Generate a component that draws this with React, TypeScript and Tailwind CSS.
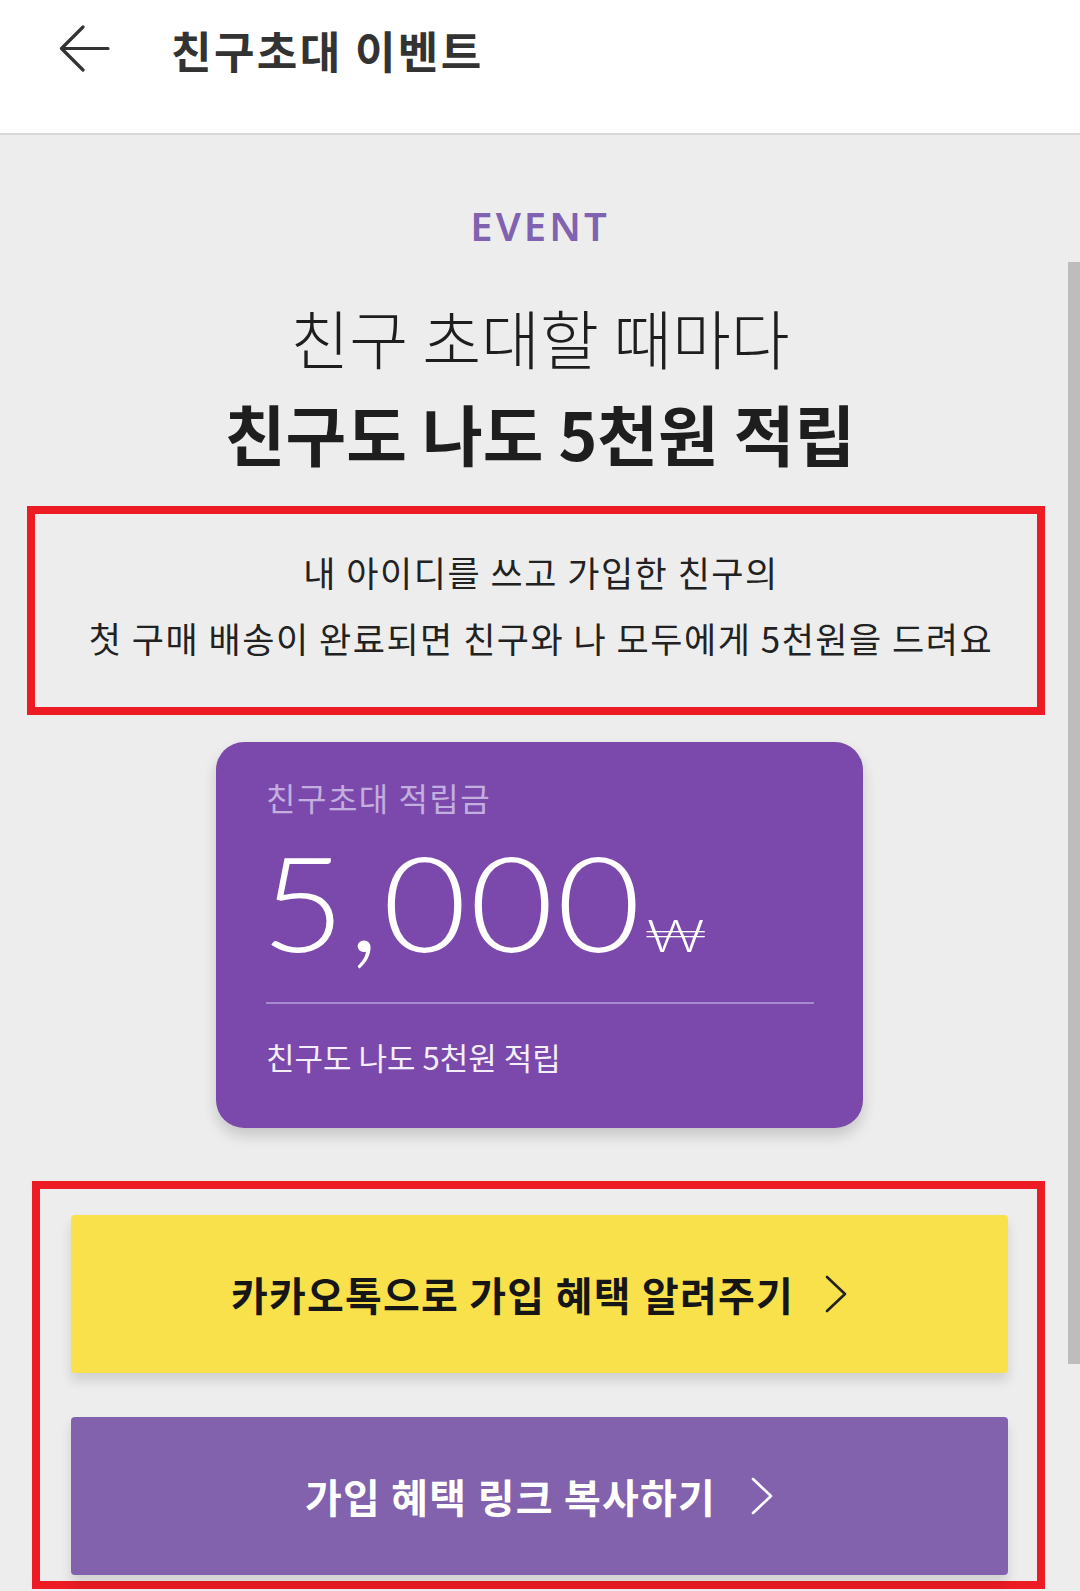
import React from "react";

function BackArrow() {
  return (
    <svg width="52" height="50" viewBox="0 0 52 50" fill="none">
      <path d="M49 23.5H3M24 2L2.5 23.5L24 45" stroke="#333" strokeWidth="3.2" strokeLinecap="round" strokeLinejoin="round" />
    </svg>
  );
}

function Chevron({ color }: { color: string }) {
  return (
    <svg width="24" height="38" viewBox="0 0 24 38" fill="none">
      <path d="M3 2L21 19L3 36" stroke={color} strokeWidth="2.6" strokeLinecap="round" strokeLinejoin="round" />
    </svg>
  );
}

export default function App() {
  return (
    <div className="relative w-[1080px] h-[1591px] overflow-hidden bg-[#ededed] font-['Noto_Sans_CJK_KR','Noto_Sans',sans-serif]">
      <header className="h-[135px] bg-white border-b-2 border-[#d8d8d8] pt-[26px]">
        <div className="flex items-center h-[48px]">
          <div className="ml-[59px]">
            <BackArrow />
          </div>
          <h1 className="ml-[60px] text-[44px] leading-[48px] font-bold text-[#333] tracking-[2.4px]">친구초대 이벤트</h1>
        </div>
      </header>

      <div className="mt-[71px] text-center text-[40px] leading-[40px] font-semibold text-[#8062b0] font-['Noto_Sans',sans-serif] tracking-[3px]">EVENT</div>

      <div className="mt-[42px] text-center text-[#1e1e1e]">
        <div className="text-[64px] leading-[96px] font-light">친구 초대할 때마다</div>
        <div className="text-[66px] leading-[96px] font-bold">친구도 나도 5천원 적립</div>
      </div>

      <div className="mt-[26px] ml-[27px] w-[1018px] h-[209px] border-8 border-[#ed1c24] pt-[25px] pl-[10px] text-center text-[35px] leading-[66px] text-[#222] tracking-[1.5px]">
        <p>내 아이디를 쓰고 가입한 친구의</p>
        <p>첫 구매 배송이 완료되면 친구와 나 모두에게 5천원을 드려요</p>
      </div>

      <div className="mt-[27px] ml-[216px] w-[647px] h-[386px] rounded-[28px] bg-[#7a49ab] shadow-[0_8px_14px_rgba(0,0,0,0.16)] pl-[50px] pt-[35px]">
        <div className="text-[32px] leading-[40px] text-[#c3aee0] tracking-[1.5px]">친구초대 적립금</div>
        <div className="mt-[18px] flex items-baseline h-[132px]">
          <div className="w-[382px] -ml-[5px]">
            <span className="inline-block origin-left scale-x-[1.1] text-[132px] leading-[132px] font-light text-white font-['Lato',sans-serif] tracking-[2.5px]">5,000</span>
          </div>
          <span className="inline-block origin-left scale-x-[1.38] text-[46px] leading-[46px] font-light text-white font-['Lato',sans-serif]">₩</span>
        </div>
        <div className="mt-[35px] w-[548px] h-[2px] bg-[#a78bcf]" />
        <div className="mt-[33px] text-[31px] leading-[40px] text-[#f3eefa]">친구도 나도 5천원 적립</div>
      </div>

      <div className="mt-[53px] ml-[32px] w-[1013px] h-[408px] border-8 border-[#ed1c24] pt-[26px] pl-[31px]">
        <button className="flex items-center justify-center w-[937px] h-[158px] rounded-[4px] bg-[#f9e14c] shadow-[0_8px_12px_rgba(0,0,0,0.12)]">
          <span className="text-[40px] font-bold text-[#161616] tracking-[1.2px]">카카오톡으로 가입 혜택 알려주기</span>
          <span className="ml-[30px]"><Chevron color="#222" /></span>
        </button>
        <button className="mt-[44px] flex items-center justify-center w-[937px] h-[158px] rounded-[4px] bg-[#8262ad] shadow-[0_8px_12px_rgba(0,0,0,0.12)]">
          <span className="text-[40px] font-bold text-white tracking-[1.2px]">가입 혜택 링크 복사하기</span>
          <span className="ml-[34px]"><Chevron color="#fff" /></span>
        </button>
      </div>

      <div className="absolute right-0 top-[262px] w-[12px] h-[1102px] bg-[#bdbdbd]" />
    </div>
  );
}
